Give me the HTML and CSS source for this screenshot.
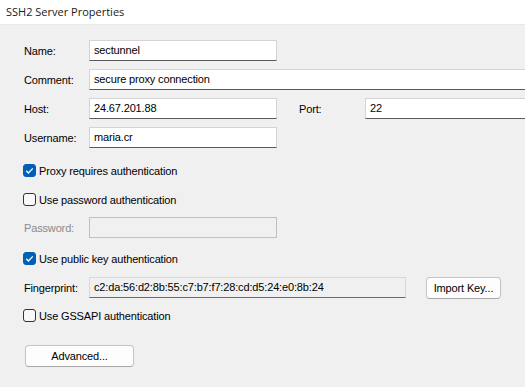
FILE: index.html
```html
<!DOCTYPE html>
<html lang="en">

<head>
    <meta charset="UTF-8">
    <title>SSH2 Server Properties</title>
    <link rel="stylesheet" href="styles.css">
</head>

<body>
    <div class="titlebar">SSH2 Server Properties</div>
    <div class="dialog">
        <div class="row">
            <span class="label">Name:</span>
            <div class="field short">sectunnel</div>
        </div>
        <div class="row">
            <span class="label">Comment:</span>
            <div class="field wide">secure proxy connection</div>
        </div>
        <div class="row">
            <span class="label">Host:</span>
            <div class="field short">24.67.201.88</div>
            <span class="label port-label">Port:</span>
            <div class="field port">22</div>
        </div>
        <div class="row">
            <span class="label">Username:</span>
            <div class="field short">maria.cr</div>
        </div>

        <div class="check check-proxy">
            <span class="box checked"><svg viewBox="0 0 13 13" width="13" height="13"><path d="M3.2 6.8 L5.4 9 L9.8 4.4" fill="none" stroke="#fff" stroke-width="1.3"/></svg></span>
            <span>Proxy requires authentication</span>
        </div>
        <div class="check check-pw">
            <span class="box"></span>
            <span>Use password authentication</span>
        </div>
        <div class="row row-pass">
            <span class="label disabled">Password:</span>
            <div class="field short off"></div>
        </div>
        <div class="check check-key">
            <span class="box checked"><svg viewBox="0 0 13 13" width="13" height="13"><path d="M3.2 6.8 L5.4 9 L9.8 4.4" fill="none" stroke="#fff" stroke-width="1.3"/></svg></span>
            <span>Use public key authentication</span>
        </div>
        <div class="row row-finger">
            <span class="label">Fingerprint:</span>
            <div class="field readonly">c2:da:56:d2:8b:55:c7:b7:f7:28:cd:d5:24:e0:8b:24</div>
            <div class="button import">Import Key...</div>
        </div>
        <div class="check check-gss">
            <span class="box"></span>
            <span>Use GSSAPI authentication</span>
        </div>
        <div class="button advanced">Advanced...</div>
    </div>
</body>

</html>
```

FILE: styles.css
```css
body {
    margin: 0;
    padding: 0;
    width: 525px;
    height: 387px;
    overflow: hidden;
    background-color: #f0f0f0;
    font-family: "Liberation Sans", Arial, sans-serif;
    font-size: 11px;
    letter-spacing: -0.15px;
    color: #000;
}

.titlebar {
    height: 25px;
    line-height: 24px;
    background-color: #fff;
    padding-left: 6px;
    font-family: "Open Sans", "Noto Sans", sans-serif;
    font-size: 11px;
    letter-spacing: 0;
    color: #1a1a1a;
    box-sizing: border-box;
    border-bottom: 1px solid #e8e8e8;
}

.dialog {
    display: flex;
    flex-direction: column;
    padding: 15px 0 0 24px;
    width: 700px;
}

.row {
    display: flex;
    align-items: center;
    height: 21px;
    margin-bottom: 8px;
}

.label {
    width: 65px;
    flex: none;
}

.label.disabled {
    color: #8a8a8a;
}

.port-label {
    margin-left: 22px;
    width: 66px;
}

.field {
    box-sizing: border-box;
    height: 21px;
    line-height: 19px;
    padding-left: 4px;
    background-color: #fff;
    border: 1px solid #d4d4d4;
    border-bottom-color: #5a5a5a;
    white-space: nowrap;
    overflow: hidden;
}

.field.short {
    width: 188px;
}

.field.wide {
    width: 520px;
}

.field.port {
    width: 220px;
}

.field.off {
    background-color: #f0f0f0;
    border-color: #c0c0c0;
    border-bottom-color: #c0c0c0;
}

.field.readonly {
    width: 317px;
    background-color: #f0f0f0;
    border-color: #d8d8d8;
    border-bottom-color: #6a6a6a;
}

.check {
    display: flex;
    align-items: center;
    height: 13px;
    margin-left: -1px;
}

.check-proxy {
    margin-top: 8px;
}

.check-pw {
    margin-top: 16px;
}

.check-key {
    margin-top: 14px;
}

.check-gss {
    margin-top: 11px;
}

.box {
    box-sizing: border-box;
    width: 13px;
    height: 13px;
    margin-right: 3px;
    border: 1px solid #333;
    border-radius: 3px;
    background-color: #f8f8f8;
    flex: none;
    display: flex;
}

.box.checked {
    background-color: #005fb8;
    border-color: #005fb8;
}

.box svg {
    margin: -1px;
}

.row-pass {
    margin-top: 11px;
    margin-bottom: 0;
}

.row-finger {
    margin-top: 12px;
    margin-bottom: 0;
}

.button {
    box-sizing: border-box;
    height: 22px;
    line-height: 20px;
    text-align: center;
    background-color: #fdfdfd;
    border: 1px solid #c4c4c4;
    border-bottom-color: #a8a8a8;
    border-radius: 4px;
}

.import {
    width: 75px;
    margin-left: 20px;
}

.advanced {
    width: 109px;
    margin-left: 1px;
    margin-top: 23px;
}
```
